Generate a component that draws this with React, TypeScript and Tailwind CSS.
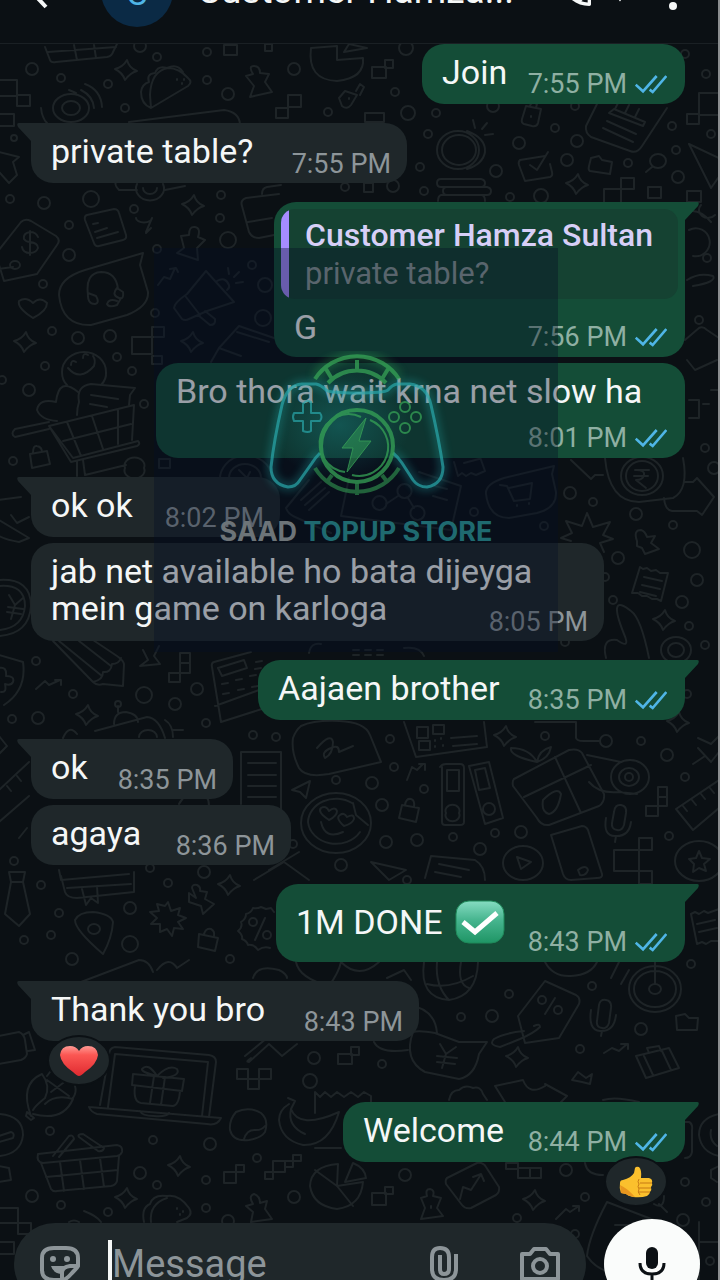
import React from 'react';

const circles = [
  [33, 69, 6], [62, 78, 4], [158, 57, 4], [109, 84, 4], [126, 108, 4], [208, 52, 4], [208, 80, 4], [229, 94, 6],
  [295, 69, 6], [141, 46, 6], [329, 112, 4], [396, 92, 4], [409, 113, 7], [437, 113, 4], [407, 48, 7], [429, 134, 4],
  [15, 138, 3], [520, 143, 6], [556, 128, 4], [578, 141, 6], [568, 160, 6], [497, 171, 6], [421, 167, 4], [629, 163, 4],
  [425, 191, 4], [542, 196, 7], [511, 197, 4], [673, 126, 4], [677, 150, 4], [707, 74, 4], [712, 134, 4], [679, 177, 6],
  [346, 187, 4], [394, 186, 6], [686, 54, 4], [494, 106, 6], [576, 106, 4],
  [11, 199, 4], [45, 203, 6], [92, 199, 8], [135, 209, 4], [70, 225, 4], [70, 255, 6], [44, 284, 4], [158, 249, 4],
  [222, 195, 4], [221, 218, 4], [229, 240, 8], [156, 313, 4], [53, 331, 4], [79, 338, 6], [111, 336, 6], [118, 357, 4],
  [133, 371, 4], [46, 366, 4], [3, 380, 4], [30, 390, 6], [145, 404, 4], [14, 461, 4], [253, 265, 4], [266, 285, 7],
  [264, 318, 8], [571, 493, 6], [594, 502, 4], [637, 514, 6], [674, 525, 4], [693, 550, 8], [619, 558, 6],
  [698, 580, 6], [683, 602, 6], [614, 600, 4], [690, 626, 4], [706, 645, 4], [475, 512, 4], [545, 526, 4],
  [706, 448, 4], [606, 577, 4], [566, 642, 4], [715, 468, 6], [700, 320, 4], [708, 258, 4],
  [37, 661, 4], [145, 695, 8], [198, 689, 6], [74, 694, 4], [176, 704, 6], [13, 719, 4], [39, 718, 6], [207, 723, 4],
  [119, 704, 3], [254, 735, 4], [277, 737, 4], [391, 739, 4], [546, 736, 4], [607, 741, 6], [642, 741, 4],
  [395, 767, 4], [668, 755, 6], [686, 777, 4], [337, 780, 4], [373, 783, 6], [383, 805, 6], [425, 789, 4],
  [387, 842, 6], [418, 840, 6], [454, 837, 4], [481, 849, 6], [496, 833, 4], [522, 832, 6], [670, 836, 4],
  [294, 844, 4], [342, 865, 6], [15, 861, 4], [205, 872, 6], [151, 868, 4], [688, 694, 4],
  [42, 885, 4], [169, 883, 4], [60, 913, 4], [131, 908, 6], [52, 935, 4], [25, 940, 4], [131, 944, 8], [73, 959, 6],
  [231, 959, 4], [408, 880, 4], [510, 994, 4], [593, 986, 4], [462, 1017, 4], [493, 1016, 6], [642, 1029, 6],
  [692, 964, 4], [581, 1049, 4], [383, 1064, 4], [315, 1058, 6], [311, 1081, 7],
  [51, 1131, 4], [154, 1140, 4], [211, 1144, 6], [141, 1173, 6], [158, 1185, 4], [207, 1180, 4], [258, 1158, 4],
  [33, 1196, 6], [62, 1205, 4], [109, 1212, 4], [207, 1208, 4], [229, 1221, 6], [295, 1197, 6],
  [567, 1170, 6], [686, 1182, 4], [586, 1197, 4], [518, 1218, 4], [684, 1220, 6], [707, 1202, 4], [576, 1234, 4],
  [406, 1175, 6], [711, 1261, 4],
];

const squares = [
  [225, 45, 13, 10], [266, 44, 7, 7], [373, 67, 14, 11], [386, 60, 8, 8], [277, 108, 12, 10], [289, 95, 13, 12],
  [366, 113, 19, 9], [0, 80, 18, 16], [18, 95, 13, 11], [0, 114, 15, 12], [365, 183, 9, 9], [700, 93, 30, 22],
  [688, 114, 12, 10], [605, 189, 17, 14], [622, 178, 13, 11], [649, 187, 13, 11], [688, 191, 14, 11],
  [133, 337, 20, 17], [153, 327, 12, 10], [153, 356, 10, 8], [160, 459, 11, 9],
  [170, 673, 11, 9], [181, 663, 10, 10], [181, 653, 10, 10], [615, 850, 25, 21], [640, 838, 13, 12],
  [640, 871, 13, 13], [647, 806, 12, 10], [659, 787, 9, 10], [659, 797, 9, 9],
  [238, 1069, 11, 10], [249, 1079, 11, 10], [260, 1069, 12, 10], [225, 1172, 12, 11], [237, 1165, 8, 7],
  [266, 1172, 8, 7], [274, 1161, 12, 11], [286, 1161, 8, 6], [294, 1155, 8, 6], [373, 1193, 14, 12],
  [386, 1187, 8, 7], [0, 1208, 19, 15], [19, 1223, 13, 11], [0, 1242, 15, 12], [507, 1163, 12, 6],
  [519, 1168, 12, 10], [531, 1168, 11, 10], [339, 1054, 14, 10], [352, 1047, 8, 8],
];

const sparkles = [
  [127, 70], [194, 205], [193, 342], [26, 342], [578, 184], [665, 620], [88, 715], [506, 736], [679, 722],
  [230, 885], [518, 1057], [180, 1166], [127, 1198], [535, 1200],
];

const sketches = [
  // basket, taco, speaker, pins along the top
  'M46 47 L51 60 Q52 63 57 62 L108 57 Q113 56 114 52 L118 44 M49 52 L117 47 M75 45 L78 60 M95 45 L97 58',
  'M152 108 L189 86 Q194 82 189 78 Q180 68 169 68 Q152 71 151 95 Z M152 108 Q142 104 142 92 Q143 84 150 82 Q147 74 156 73 Q159 65 168 68 Q178 63 184 72 M178 79 v1 M183 83 v1 M185 79 v1',
  'M54 108 a18 14 0 1 1 36 0 a18 14 0 1 1 -36 0 M63 108 a9 7 0 1 1 18 0 a9 7 0 1 1 -18 0 M86 84 Q102 90 103 107 M82 90 Q94 96 95 108 M42 108 Q43 118 48 123 M77 93 L70 90',
  'M247 76 L254 74 Q249 66 255 66 Q261 66 261 73 L270 74 L266 82 L273 92 L251 97 L255 86 Z',
  'M340 98 L346 91 L358 95 L352 105 Q348 110 343 106 Z M357 91 L361 84 L365 87 L361 95 M350 98 v1',
  'M338 46 L312 48 Q308 80 338 81 Q366 78 364 58 L338 60 Z M345 52 L350 44 L368 48 Z',
  'M130 122 L225 110 Q240 112 241 124',
  // coin stack, tags and clipboard
  'M438 150 a21 19 0 1 1 42 0 a21 19 0 1 1 -42 0 M443 150 a17 15 0 1 1 34 0 a17 15 0 1 1 -34 0 M468 131 Q487 138 486 152 Q484 164 468 169 M474 120 l2 8 M488 123 l-5 6 M494 134 l-8 1',
  'M442 179 h40 q4 1 4 4 q0 4 -4 4 h-40 q-4 0 -4 -4 q0 -4 4 -4 M448 187 h40 q4 1 4 4 q0 4 -4 4 h-40 q-4 0 -4 -4 q0 -4 4 -4 M442 195 h40 q4 0 4 6 M439 201 q0 -5 3 -6',
  'M527 106 L542 109 L539 123 Q538 127 533 126 L525 124 Q522 123 523 119 Z M531 106 Q532 101 538 104 L537 108 M532 116 v1',
  'M598 104 L587 126 Q586 133 592 137 L631 151 Q638 154 643 146 L668 108 M604 128 L634 142 M608 121 L637 134 M610 113 L644 126 L646 122 L615 109 Z M616 109 l4 -8 M626 113 l4 -8 M636 117 l4 -8',
  'M546 156 L521 160 Q519 162 520 165 L526 181 L551 177 Q554 176 553 172 L551 164 M531 165 L538 170 L549 152',
  'M592 158 L600 156 L603 160 L613 162 L611 174 L591 171 Q589 170 590 166 Z',
  'M651 161 a8 7 0 1 1 16 0 a8 7 0 1 1 -16 0 M653 167 L647 172',
  'M690 144 L720 158 M690 144 L712 188 L719 178',
  'M0 152 L20 157 L14 162 L18 175 L10 183 L0 172',
  // dollar tag, note, headset bubble, heart
  'M0 250 L22 222 Q26 218 32 221 L57 236 Q62 240 58 245 L38 274 L5 281 L0 265 M0 269 L14 267 M11 265 a5 4 0 1 1 10 0 a5 4 0 1 1 -10 0 M39 237 Q37 232 31 232 Q24 233 25 239 Q27 242 31 242 Q39 243 39 248 Q37 253 31 253 Q24 253 23 247 M31 231 V255',
  'M88 215 L115 209 Q119 209 120 213 L127 235 Q128 239 124 240 L100 246 Q96 247 95 243 L86 220 Q85 216 88 215 M94 224 l5 -1 M96 232 l12 -4 M98 238 l21 -6',
  'M144 253 L86 270 Q60 278 60 295 Q63 326 92 325 L128 315 Q150 306 149 292 L141 265 Z M89 295 Q86 273 102 272 Q117 272 119 289 M89 293 l8 3 q4 7 -1 8 q-8 0 -7 -11 M118 288 l6 4 q1 8 -4 6 q-8 -3 -2 -10 M122 298 L118 305 q-8 3 -10 -1 q2 -6 10 -3',
  'M34 318 Q18 308 20 301 Q27 296 34 303 Q41 296 48 303 Q48 311 34 318',
  'M147 232 L153 218 a7 4 0 1 1 -16 0 M147 233 L152 228',
  'M178 253 L185 248 L182 236 L190 235 Q190 226 196 227 Q202 228 199 237 L206 240 L198 248 L199 260 Z',
  // megaphone, suitcase
  'M207 271 L188 294 Q175 303 175 308 L183 319 Q186 321 190 319 L208 311 L235 302 Z M187 297 L201 315 M199 315 L211 325 Q217 325 216 319 L206 311 M218 281 Q226 276 230 285 Q231 288 228 290 M229 268 l1 6 M240 272 l-5 5 M244 282 l-7 1',
  'M159 285 L165 277 L171 279 L176 268 M171 269 L177 268 L179 272',
  'M280 194 L247 198 Q241 200 243 206 L250 232 Q253 238 260 238 L275 235 M249 222 L273 218 M263 194 q0 -6 5 -7 l14 -2',
  'M212 362 L220 348 L240 326 L275 338 M220 348 L242 356 M238 332 L270 342',
  // shopping cart with items
  'M50 426 L74 458 L139 441 Q142 444 138 446 L72 462 Z M50 422 L16 429 Q11 434 16 437 L50 429 M50 426 L135 405 L133 440 M64 441 L132 424 M68 422 L82 456 M93 416 L104 449 M119 410 V444 M78 461 V476 M84 460 L86 475 L127 465 M126 468 a10 8 0 1 1 19 0 a10 8 0 1 1 -19 0',
  'M63 372 a22 20 0 1 1 44 0 a22 18 0 0 1 -5 13 M63 372 q0 8 5 13 M69 368 q12 14 26 -2 q2 -6 -1 -10 M72 365 q0 -6 5 -3 M84 358 q0 -6 5 -3',
  'M78 415 Q78 408 80 402 Q77 386 92 384 L136 388 L131 395 L130 405 M92 395 l27 4 M91 404 l17 3 M79 392 Q60 376 57 402 Q40 398 38 410 Q42 420 58 421',
  'M31 454 L48 451 L51 464 L33 468 Z M34 453 q0 -8 4 -7 q5 1 5 6',
  // around the watermark
  'M221 482 a26 24 0 0 1 52 -5 M230 478 a16 14 0 0 1 32 0 M240 470 l8 8 l3 -6',
  'M310 480 L287 508 Q289 514 296 517 L332 533 M302 500 L322 482 M306 505 L326 488 M310 510 L330 492',
  'M350 478 L342 516 L452 530 L462 486 L420 472 M380 510 a7 7 0 1 1 1 0 M405 498 a7 7 0 1 1 1 0 M418 520 a7 7 0 1 1 1 0 M387 504 l12 -8 M409 498 l6 10 M436 486 l12 3 M434 496 l14 4',
  'M555 466 L505 478 Q486 484 487 494 Q490 518 510 518 L538 513 Q558 508 557 492 L553 474 Z M501 485 L508 486 L515 501 L531 499 L533 483 L510 488 M518 505 v1 M530 503 v1',
  'M455 462 l4 14 l4 -3 l4 3 l5 -3 l5 2 l9 -4 l-5 -14 M465 463 l15 -4',
  // rupee coin and arrows
  'M606 458 Q610 502 640 502 L674 498 Q690 490 684 458 M622 476 a21 19 0 1 1 42 0 a21 19 0 1 1 -42 0 M627 476 a16 15 0 1 1 32 0 a16 15 0 1 1 -32 0 M636 470 h14 M635 476 h14 M637 470 q9 0 8 5 q-1 5 -8 5 l10 8',
  'M572 460 L592 479 L596 475 H604 M685 482 H694 L698 478 L715 497 L703 515 L698 511 H673 Q666 510 665 498',
  'M588 513 l6 14 l17 -5 l-7 13 l10 4 l-13 4 l4 9 M588 513 l-5 13 l-16 -5 l6 12 l-11 5 l10 3',
  'M638 541 Q634 530 642 530 Q646 531 648 537 L656 536 L652 543 L660 549 L646 554 L643 548 L638 546 Z',
  'M641 567 l3 2 l4 -1 l4 3 l5 -1 l4 3 l8 0 L662 601 l-4 -2 l-5 0 l-5 -3 l-5 0 l-4 -3 l-6 0 Z M645 577 l18 4 M643 585 l18 4 M641 592 l16 4',
  'M625 634 Q608 592 632 611 Q642 618 650 658 M607 658 Q602 638 618 640 Q632 650 625 634 M662 650 a15 13 0 1 1 30 0 a15 13 0 1 1 -30 0 M669 650 a8 7 0 1 1 16 0 a8 7 0 1 1 -16 0',
  // tags and coins on the left
  'M0 500 L22 497 M0 520 L30 538 L20 542 Q8 540 0 536 M12 515 l6 8 l12 -6',
  'M0 580 Q32 578 32 606 Q30 634 0 636 M0 586 Q26 584 26 606 Q24 628 0 630 M10 595 l6 10 l8 -7 M16 605 l-4 14 M9 607 l15 2 M8 612 l14 2',
  // shield, pencil, calculator
  'M0 655 L24 662 Q28 690 5 705 M0 668 q8 -2 7 8 q9 0 7 6 q-2 4 -8 2 q2 9 -4 8',
  'M54 641 L94 682 Q98 686 104 684 L124 686 L125 664 Q124 660 118 656 L94 640 M94 682 Q104 680 104 672 Q112 673 113 664 Q120 664 122 658 M60 641 L103 676 M80 641 L112 666',
  'M144 650 l5 10 l-8 6 l20 -2 l-6 -8 l5 -10',
  'M215 662 L252 652 M215 662 Q212 663 213 667 L222 722 L266 708 M216 706 L260 690 M219 668 L245 660 L248 668 L223 676 Z M223 684 l6 -1 M237 680 l6 -1 M251 676 l6 -1 M224 694 l6 -1 M239 690 l6 -1 M253 687 l6 -1 M257 662 l6 -1 M256 669 l6 -1',
  'M37 689 L46 681 L50 685 L61 680 M56 680 h6 v5',
  'M310 653 Q312 642 322 644 M354 655 h6 M366 655 h6 M378 655 h6 M354 650 h6 M366 650 h6 M378 650 h6 M405 648 q16 -2 20 8 M96 731 L148 717 Q160 718 166 738 M115 724 q0 -12 12 -12 q12 2 12 10 M119 712 v-6 M140 737 a9 7 0 1 1 18 0 M166 720 q8 5 8 17 M174 730 h10',
  // autograph bubble, QR card, binders
  'M302 726 Q315 720 340 721 Q366 722 371 735 L382 762 L330 774 Q306 778 300 768 Q292 752 294 738 Q297 730 302 726 M318 748 q14 -16 16 -6 q0 12 -8 16 q-4 -6 6 -10 q8 -4 8 4 l14 -6',
  'M405 722 L417 757 L488 747 L485 722 M418 727 h11 v11 h-11 Z M434 725 h11 v9 h-11 Z M420 741 h11 v9 h-11 Z M436 740 v1 M442 738 v1 M436 746 v1 M444 745 v1 M452 738 l26 -2 M454 746 l24 -2',
  'M441 767 q2 -3 6 -3 h14 q4 0 4 4 v54 q0 3 -4 3 h-15 q-3 0 -3 -3 v-55 M448 770 h12 v21 h-12 Z M447 813 a7 6 0 1 1 13 0 a7 6 0 1 1 -13 0 M470 766 L490 762 L504 818 L486 824 Z M476 770 l10 -2 l5 20 l-11 2 Z M484 809 a6 6 0 1 1 12 0 a6 6 0 1 1 -12 0',
  'M408 780 L413 767 L418 770 L424 764 M420 764 l6 0 l0 6',
  'M242 752 h40 v58 M242 752 v52 M249 763 h28 M249 775 h28 M249 786 h28 M249 797 h28',
  'M293 790 L311 781 L307 798 L301 792 Z',
  'M302 823 a35 30 0 1 1 70 0 a35 30 0 1 1 -70 0 M309 822 a28 24 0 0 1 44 -19 M309 822 a28 24 0 0 0 52 10 M354 803 l3 12 l12 10 M330 820 q-12 -8 -8 -12 q5 -3 8 3 q6 -5 8 0 q0 5 -8 9 M345 826 q-9 -8 -4 -11 q4 -3 7 2 q7 -4 7 2 q-2 5 -10 7 M322 822 q4 18 22 10',
  'M403 805 L420 808 L417 822 L400 818 Z M406 805 q1 -7 6 -6 q4 1 3 8',
  // gift, camera, drum
  'M515 779 L570 750 Q579 748 583 753 L605 794 Q606 802 600 806 L550 825 Q542 826 538 818 L514 786 Q513 781 515 779 M525 797 L592 765 M556 757 L582 813 M544 800 q14 -14 18 -6 q-3 18 -12 20 q-8 -2 -6 -14 M538 762 Q510 756 512 748 Q530 748 538 762 Q540 750 552 747 Q550 758 538 762',
  'M588 755 L622 762 M590 782 Q600 794 620 792 L638 794 M612 777 a19 17 0 1 1 38 0 a19 17 0 1 1 -38 0 M620 777 a10 9 0 1 1 20 0 a10 9 0 1 1 -20 0 M626 777 a4 4 0 1 1 8 0 a4 4 0 1 1 -8 0',
  'M536 722 H577 V738 Q578 741 584 741 H600',
  'M720 780 L677 809 L694 830 L720 808 M684 806 l4 5 M693 800 l4 5 M702 794 l4 5 M711 788 l4 5',
  'M699 738 L712 744 L720 736 M699 748 L712 762 L720 752 M706 756 L694 764',
  'M615 812 q1 -8 7 -7 q6 1 5 8 l-2 12 q-2 6 -7 5 q-6 -1 -5 -7 Z M607 818 q-3 18 9 18 q14 1 16 -14 M617 836 l-1 6',
  'M552 835 L583 826 Q587 826 589 830 L603 874 Q604 878 598 878 L572 880 Q566 880 564 874 Z M579 870 q8 -6 10 0 q-2 6 -8 5 Z',
  'M504 863 a20 17 0 1 1 40 0 a20 17 0 1 1 -40 0 M518 857 L532 862 L522 869 Z M676 861 a24 20 0 1 1 48 0 a24 20 0 1 1 -48 0 M700 851 l3 7 l8 1 l-6 5 l2 7 l-7 -3 l-6 4 l1 -8 l-5 -5 l7 -1 Z',
  'M372 862 L407 870 L390 880 Z M426 878 L432 856 L476 860 Q486 866 486 880 M440 864 l30 6 M436 872 l26 5 M285 862 L310 880',
  // tie, books, pin, stars
  'M10 872 H26 L24 882 H12 Z M12 882 L6 914 L20 926 L31 914 L24 882',
  'M62 876 L66 892 Q68 898 78 898 L135 892 V872 M68 888 L132 884 M83 889 L87 905 L92 898 L99 903 L98 886',
  'M104 954 Q76 930 76 920 Q80 912 94 912 Q112 914 114 922 Q113 938 104 954 M89 929 a6 5 0 1 1 12 0 a6 5 0 1 1 -12 0',
  'M169 902 l3 9 l9 -3 l-2 7 l8 3 l-8 4 l5 7 l-9 -1 l-2 8 l-5 -7 l-7 3 l0 -8 l-9 0 l6 -6 l-7 -6 l9 -1 l-2 -7 l8 2 Z',
  'M190 893 L197 898 L193 888 Q193 884 198 885 Q202 887 201 891 L208 892 L206 899 L215 904 L204 914 L202 906 L190 902 Z',
  'M200 934 L219 938 L216 951 L199 947 Z M205 934 q2 -6 7 -5 q4 2 3 7',
  'M262 907 l5 2 l5 -1 l3 4 M262 907 q-4 2 -8 1 q-2 5 -7 6 q0 5 -5 8 q2 5 -3 9 q5 4 4 8 q5 2 6 6 q6 -1 10 5 q6 -4 12 -2 M266 918 L256 940 M250 922 a4 4 0 1 1 8 0 a4 4 0 1 1 -8 0 M264 935 a4 4 0 1 1 8 0 a4 4 0 1 1 -8 0',
  'M692 914 l4 -2 l4 2 l5 -3 l4 2 l11 -4 M692 914 l6 30 l5 -2 l4 2 l5 -3 l8 0 M698 924 l18 -4 M700 932 l18 -4',
  // ball, wheel, percent tag
  'M425 962 Q420 998 450 1000 Q478 996 479 962 M438 962 Q436 986 450 1000 M462 962 Q458 984 470 988 M428 984 Q450 990 474 976',
  'M630 989 a26 23 0 1 1 52 0 a26 23 0 1 1 -52 0 M635 989 a21 18 0 1 1 42 0 a21 18 0 1 1 -42 0 M650 989 a6 5 0 1 1 12 0 a6 5 0 1 1 -12 0 M656 984 V962 M546 962 q8 15 26 14 q20 -1 26 -14 M612 978 l8 -16 M622 984 l8 -14',
  'M297 962 Q300 978 330 986 Q340 972 342 962 M342 962 Q360 980 380 962 M82 982 L140 960 Q150 960 154 972 M158 970 Q170 955 178 968 L190 960 M254 978 q4 -14 26 -8 q8 4 8 8 M388 978 L405 970 L412 980',
  'M546 981 L577 995 Q582 998 580 1004 L560 1038 L526 1043 L519 1016 Z M535 1026 q6 -3 6 1 q-6 6 -20 12 l-20 8 q-12 -2 -6 -8 q10 -6 30 -8 M556 998 L546 1014 M539 1000 a4 4 0 1 1 8 0 a4 4 0 1 1 -8 0 M555 1010 a4 4 0 1 1 8 0 a4 4 0 1 1 -8 0',
  'M600 1005 q1 -6 7 -5 q6 1 5 8 l-2 15 q-2 6 -7 5 q-6 -1 -5 -7 Z M592 1010 q-3 20 9 21 q14 1 16 -16 M603 1031 l-1 5 M677 1016 L686 1014 L690 1018 L699 1018 L698 1030 L678 1030 Z',
  'M414 1032 Q404 1060 426 1072 L460 1079 Q476 1076 480 1054 L488 1042 L460 1042 L436 1033 Q420 1030 414 1032 M441 1044 l6 10 l10 -7 M447 1054 l-4 14 M438 1056 l20 2 M438 1062 l18 2',
  'M605 1053 L613 1048 L620 1051 L628 1044 M622 1044 h7 v5 M637 1056 L670 1048 L680 1068 L647 1078 Z M650 1053 l-2 -5 l12 -2 l2 5 M645 1056 l9 19 M663 1051 l9 19',
  'M410 1005 q26 4 28 28 M375 1042 q6 12 34 8',
  // corn, laptop, banana and basket
  'M0 1036 L20 1032 Q25 1034 26 1040 L28 1054 Q27 1058 22 1060 L0 1064 M24 1035 L30 1032 L36 1050 L29 1051',
  'M32 1116 Q20 1084 43 1074 Q52 1086 46 1098 Q36 1106 34 1110 M34 1114 Q64 1122 74 1099 Q56 1094 46 1104 M28 1112 l7 6 l-3 2 l-5 -4 Z M48 1080 L70 1096 M52 1092 L68 1080 M48 1076 l3 -4 M76 1086 q2 6 -2 12',
  'M90 1107 L222 1118 Q218 1126 208 1124 L98 1114 Q92 1112 90 1107 M101 1105 L110 1055 Q110 1048 116 1047 L210 1055 Q217 1056 217 1062 L210 1117 M109 1107 L116 1054 L209 1062 L203 1116 M141 1111 q2 5 14 5 q13 1 15 -3',
  'M134 1074 L185 1079 L183 1091 L133 1085 Z M136 1086 q-2 16 6 17 L174 1106 q6 -1 7 -15 M155 1076 L151 1103 M166 1077 L162 1105 M158 1076 q-16 -4 -15 -7 q6 -7 15 7 q12 -12 20 -7 q4 7 -14 9',
  'M252 1058 Q246 1062 250 1062 L270 1044 L283 1056 L298 1044 M246 1056 L268 1038',
  'M237 1112 Q250 1106 262 1113 Q270 1120 266 1132 Q262 1138 250 1140 Q234 1142 231 1130 Q230 1120 237 1112 M245 1139 q3 -10 12 -9 q6 0 9 -4',
  'M289 1098 L296 1101 L292 1109 Q300 1130 340 1112 Q330 1146 304 1145 Q282 1140 280 1120 Q280 1110 290 1104 M292 1109 Q288 1126 306 1134 M316 1113 V1092 l5 5 l5 -5 l6 5 l6 -5 l7 5 l7 -5 l7 5 l6 -5 l7 4 V1102 M316 1148 h26',
  'M39 1154 L118 1145 Q124 1146 123 1152 Q122 1155 118 1156 L44 1163 Q37 1162 39 1154 M42 1163 L52 1189 Q54 1192 58 1191 L112 1186 Q117 1185 118 1181 L120 1156 M47 1177 L119 1170 M61 1162 L65 1191 M81 1160 L85 1189 M101 1158 L105 1187 M54 1156 L70 1136 Q74 1134 75 1139 L60 1157 M80 1137 L99 1151 Q104 1152 105 1148 L84 1134 Q78 1134 80 1137',
  'M0 1114 Q24 1116 24 1135 Q22 1154 0 1156 M0 1136 L12 1132 Q16 1133 14 1138 L0 1142 M0 1166 L10 1168 L12 1180 L0 1182',
  'M338 1186 L339 1164 Q312 1166 311 1186 Q314 1206 338 1209 Q362 1206 364 1182 Z M338 1186 L316 1170 M338 1186 L354 1206 M346 1182 L354 1163 Q366 1168 367 1178 Z',
  'M145 1222 Q142 1208 151 1204 Q154 1194 168 1196 Q180 1194 190 1208 Q194 1214 188 1218 L178 1222 M152 1222 Q150 1204 168 1198 M178 1208 v1 M184 1211 v1 M181 1214 v1 M85 1211 Q98 1216 102 1222 M70 1222 q5 -3 10 0',
  'M247 1206 L254 1204 Q249 1196 255 1194 Q261 1196 261 1203 L268 1201 L266 1209 L273 1219 L252 1222 L254 1212 Z M422 1198 L428 1196 Q426 1189 431 1189 Q436 1190 434 1196 L442 1198 L438 1208 L444 1216 L422 1219 L426 1208 Z M432 1206 v2',
  'M448 1178 L478 1163 Q484 1162 487 1167 L500 1187 Q501 1192 497 1195 L472 1208 Q466 1209 463 1205 L447 1184 Q446 1180 448 1178 M461 1199 L464 1187 L472 1190 L481 1176 M474 1177 L482 1174 L485 1181',
  'M557 1219 L567 1209 L571 1212 L580 1206 M574 1206 h6 v5 M588 1256 Q590 1236 608 1202 L655 1220 M588 1256 Q596 1268 610 1272 M616 1225 h14 M586 1163 q2 12 18 12 M655 1204 q10 6 10 -8 M660 1204 l8 8',
  'M450 1100 Q452 1090 460 1090 Q466 1084 474 1088 Q482 1086 484 1094 L488 1100 M496 1086 L506 1102 M496 1086 L524 1080 Q530 1096 546 1086 M546 1084 L568 1096 L562 1102 M604 1100 Q616 1096 640 1102 M573 1080 l6 -8 l8 6 l6 -4 l-2 10 l-8 -2 Z',
  'M686 1122 H690 Q694 1124 693 1130 V1152 Q692 1158 686 1158 M720 1114 Q700 1118 700 1135 Q702 1152 720 1156 M712 1130 q-2 10 6 16 M712 1170 l8 -4 M712 1170 v8 l6 4',
  'M700 1222 V1280 M700 1242 H720',
  // mid right column
  'M688 212 Q700 208 712 222 M702 205 a8 7 0 1 0 14 10 M690 230 a14 14 0 1 1 4 26 M688 280 q12 -8 26 -4 q4 6 -20 10 M686 340 L700 328 Q704 326 708 330 L720 338 M688 360 L696 370 L718 360 M690 400 h10 v18 h-10 M712 390 h8 M704 404 h6',
  'M118 180 Q114 184 120 190 H138 M138 184 a14 12 0 1 0 26 0 M144 188 a7 6 0 1 0 14 0 M166 190 L186 186',
  'M0 790 L30 762 M0 822 L30 796 M8 786 l4 5 M18 776 l4 5 M64 738 q6 -14 14 -4 M0 736 l8 10 l-8 8 M20 838 l8 -10 M180 804 q6 -12 20 -12 q10 2 10 14 M60 870 L62 880 L130 874 M270 870 L300 852 M255 880 L285 862',
];

const Wallpaper = () => {
  return (
    <svg
      className="pointer-events-none absolute inset-0 h-full w-full"
      viewBox="0 0 720 1280"
      preserveAspectRatio="xMidYMin slice"
      fill="none"
      stroke="#1e2427"
      strokeWidth="2"
      strokeLinecap="round"
      strokeLinejoin="round"
      aria-hidden="true"
    >
      {circles.map(([x, y, r]) => (
        <circle key={`${x}-${y}`} cx={x} cy={y} r={r} />
      ))}
      {squares.map(([x, y, w, h]) => (
        <rect key={`${x}-${y}`} x={x} y={y} width={w} height={h} />
      ))}
      {sparkles.map(([x, y]) => (
        <path
          key={`${x}-${y}`}
          transform={`translate(${x} ${y})`}
          d="M1 -10 Q3 -2 11 1 Q4 3 -1 10 Q-3 3 -11 -1 Q-3 -3 1 -10 Z"
        />
      ))}
      {sketches.map((d) => (
        <path key={d} d={d} />
      ))}
    </svg>
  );
};

const Ticks = () => (
  <svg className="h-[19px] w-8" viewBox="0 0 96 57" fill="none" stroke="#4fb5e6" strokeWidth="8" aria-label="Read">
    <path d="M2 29 L24 49 L65 3 M44 44 L53 51 L94 3" />
  </svg>
);

const Tail = ({ side }: { side: 'left' | 'right' }) =>
  side === 'left' ? (
    <svg className="absolute top-0 -left-[14px] h-6 w-10 text-[#1f272a]" viewBox="0 0 40 24" fill="currentColor" aria-hidden="true">
      <path d="M2 0 H40 V24 H14 V18 L1 4 Q-1 0 2 0 Z" />
    </svg>
  ) : (
    <svg className="absolute top-0 -right-[14px] h-6 w-10 text-[#144d37]" viewBox="0 0 40 24" fill="currentColor" aria-hidden="true">
      <path d="M38 0 H0 V24 H26 V18 L39 4 Q41 0 38 0 Z" />
    </svg>
  );

type BubbleProps = {
  mine?: boolean;
  tail?: boolean;
  time: string;
  className: string;
  quote?: React.ReactNode;
  reaction?: React.ReactNode;
  children: React.ReactNode;
};

const Bubble = ({ mine, tail, time, className, quote, reaction, children }: BubbleProps) => {
  return (
    <div
      className={`relative flex max-w-full flex-col rounded-[22px] ${
        mine ? 'self-end bg-[#144d37]' : 'self-start bg-[#1f272a]'
      } ${className}`}
    >
      {tail && <Tail side={mine ? 'right' : 'left'} />}
      {quote}
      <div className={`relative flex flex-1 justify-between pt-[10px] pb-1 pl-5 ${mine ? 'pr-[18px]' : 'pr-4'}`}>
        <div className="self-start text-[34px] leading-[37px] whitespace-nowrap text-[#f5f7f7]">{children}</div>
        <div
          className={`flex items-center gap-2 self-end text-[27px] leading-[30px] whitespace-nowrap ${
            mine ? 'pb-px text-[#8fb0a3]' : 'text-[#8d9599]'
          }`}
        >
          <time>{time}</time>
          {mine && <Ticks />}
        </div>
      </div>
      {reaction}
    </div>
  );
};

const CheckEmoji = () => (
  <svg className="h-11 w-[50px]" viewBox="0 0 50 44" role="img" aria-label="Done">
    <defs>
      <linearGradient id="check" x1="0" y1="0" x2="0" y2="1">
        <stop offset="0" stopColor="#86dcc2" />
        <stop offset="0.45" stopColor="#47b58f" />
        <stop offset="1" stopColor="#1f9565" />
      </linearGradient>
    </defs>
    <rect x="1" y="1" width="48" height="42" rx="13" fill="url(#check)" stroke="#1f8a5a" />
    <path d="M8 22 L20 32 L42 13" fill="none" stroke="#fff" strokeWidth="5" />
  </svg>
);

const HeartEmoji = () => (
  <svg className="h-[30px] w-[38px]" viewBox="0 0 38 30" role="img" aria-label="Heart">
    <defs>
      <linearGradient id="heart" x1="0" y1="0" x2="0" y2="1">
        <stop offset="0" stopColor="#ff9a94" />
        <stop offset="0.3" stopColor="#fb5753" />
        <stop offset="1" stopColor="#e02a30" />
      </linearGradient>
    </defs>
    <path d="M19 30 Q17 30 13 26 Q1 18 0 9 Q1 0 10 0 Q16 0 19 5 Q22 0 28 0 Q37 0 38 9 Q37 18 25 26 Q21 30 19 30 Z" fill="url(#heart)" />
  </svg>
);

const ThumbEmoji = () => (
  <svg className="h-8 w-[34px]" viewBox="0 0 34 32" role="img" aria-label="Thumbs up">
    <path
      d="M1 17 Q1 14 4 14 Q12 12 15 7 L16 2 Q17 0 20 1 Q23 4 22 12 L30 12 Q34 13 33 17 Q34 19 32 21 Q33 24 31 26 Q31 28 28 30 Q22 32 14 31 Q9 30 7 28 L2 27 Q0 22 1 17 Z"
      fill="#fbc02d"
    />
    <path d="M1 19 Q8 22 16 31 Q9 30 7 28 L2 27 Z" fill="#e8961f" />
    <path
      d="M21 17 H33 M20 22 H32 M20 26 H31 M20 13 Q18 16 20 18 Q18 21 20 23 Q18 26 21 29"
      fill="none"
      stroke="#c77a14"
      strokeWidth="1"
    />
  </svg>
);

const StoreLogo = () => (
  <svg className="absolute inset-0 h-full w-full" viewBox="154 248 404 404" fill="none" aria-hidden="true">
    <defs>
      <radialGradient id="glow">
        <stop offset="0" stopColor="#1fa5a5" stopOpacity="0.28" />
        <stop offset="1" stopColor="#1fa5a5" stopOpacity="0" />
      </radialGradient>
      <filter id="soft" x="-20%" y="-20%" width="140%" height="140%">
        <feGaussianBlur stdDeviation="4" />
      </filter>
      <path
        id="pad"
        d="M320 453 Q315 458 312 463 L300 480 Q296 487 288 487 Q271 484 271 467 Q274 440 282 405 Q287 385 302 384 L316 384 Q321 385 326 390 Q330 393 357 393 Q384 393 388 390 Q392 385 397 384 L410 384 Q427 386 431 405 Q439 440 443 467 Q443 484 427 487 Q418 487 413 480 L402 463 Q398 457 393 453"
      />
    </defs>
    <ellipse cx="340" cy="425" rx="70" ry="55" fill="url(#glow)" />
    <use href="#pad" stroke="#22b8b8" strokeWidth="7" opacity="0.35" filter="url(#soft)" />
    <path d="M315 377 A52 52 0 0 1 399 377" stroke="#2fae55" strokeWidth="8" opacity="0.35" filter="url(#soft)" />
    <use href="#pad" stroke="#2aa7a9" strokeWidth="3" opacity="0.7" />
    <path
      d="M305 402 Q308 400 311 402 V413 H320 Q323 417 320 421 H311 V431 Q308 433 303 431 V421 H294 Q292 417 294 413 H303 V404 Z"
      stroke="#2aa7a9"
      strokeWidth="2"
      strokeLinejoin="round"
      opacity="0.7"
    />
    <g stroke="#36a356" opacity="0.75">
      <circle cx="357" cy="446" r="36" strokeWidth="4" />
      <path d="M361 417 A29 29 0 1 0 345 472 M370 420 A29 29 0 0 1 352 475" strokeWidth="2" />
      <path d="M315 379 A50 50 0 0 1 399 379 M328 383 A40 40 0 0 1 386 383 M357 360 V372 M326 369 L332 379 M388 369 L382 379" strokeWidth="4" />
      <g opacity="0.75">
        <path d="M315 468 A49 49 0 0 0 399 468 M357 483 V495 M332 475 L326 483 M382 475 L388 483" strokeWidth="4" />
      </g>
      <g strokeWidth="2">
        <circle cx="405" cy="407" r="5" />
        <circle cx="394" cy="417" r="5" />
        <circle cx="416" cy="417" r="5" />
        <circle cx="405" cy="428" r="5" />
      </g>
    </g>
    <path d="M366 418 L342 448 H353 L347 472 L371 441 H359 Z" fill="#36a356" fillOpacity="0.6" stroke="#3aa658" opacity="0.8" />
  </svg>
);

const Header = () => {
  return (
    <header className="relative flex h-11 shrink-0 items-end overflow-hidden border-b border-[#1a2024] bg-[#0b1014] px-5 pb-4">
      <div className="flex h-[72px] w-full items-center">
        <button type="button" aria-label="Back" className="w-[81px] shrink-0 pl-2">
          <svg className="h-9 w-6" viewBox="0 0 24 36" fill="none" stroke="#f5f7f7" strokeWidth="4" aria-hidden="true">
            <path d="M18 2 L3 18 L18 34" />
          </svg>
        </button>
        <div className="flex size-[72px] shrink-0 items-center justify-center rounded-full bg-[#0b2a45] pt-1 text-[34px] text-[#4fb5e6]">C</div>
        <h1 className="ml-6 flex-1 text-[37px] leading-[44px] whitespace-nowrap text-[#f5f7f7]">Customer Hamza...</h1>
        <button type="button" aria-label="Call" className="flex items-center gap-3">
          <svg className="size-10" viewBox="0 0 24 24" fill="#f5f7f7" aria-hidden="true">
            <path d="M6.540 5c.06.890.21 1.760.45 2.590l-1.200 1.200c-.41-1.200-.67-2.470-.76-3.790h1.510m9.860 12.020c.85.240 1.720.39 2.600.45v1.490c-1.320-.09-2.590-.35-3.800-.75l1.200-1.190M7.500 3H4c-.55 0-1 .45-1 1 0 9.390 7.610 17 17 17 .55 0 1-.45 1-1v-3.490c0-.55-.45-1-1-1-1.240 0-2.450-.2-3.570-.57a1 1 0 0 0-1.020.24l-2.200 2.200a15.100 15.100 0 0 1-6.590-6.590l2.200-2.200c.28-.28.36-.67.25-1.020A11.400 11.400 0 0 1 8.500 4c0-.55-.45-1-1-1z" />
          </svg>
          <svg className="h-6 w-6" viewBox="0 0 24 24" fill="none" stroke="#f5f7f7" strokeWidth="3" aria-hidden="true">
            <path d="M4 10 L12 20 L20 10" />
          </svg>
        </button>
        <button type="button" aria-label="More options" className="ml-9 pr-5">
          <svg className="h-10 w-[10px]" viewBox="0 0 10 40" fill="#f5f7f7" aria-hidden="true">
            <circle cx="5" cy="5" r="4" />
            <circle cx="5" cy="20" r="4" />
            <circle cx="5" cy="35" r="4" />
          </svg>
        </button>
      </div>
    </header>
  );
};

const Composer = () => {
  return (
    <form className="relative mt-[57px] flex shrink-0 items-center pr-[18px] pl-[14px]" onSubmit={(e) => e.preventDefault()}>
      <div className="flex h-[82px] min-w-0 flex-1 items-center rounded-full bg-[#1f272a] px-[26px]">
        <button type="button" aria-label="Stickers" className="shrink-0">
          <svg className="h-9 w-10" viewBox="0 0 40 36" fill="none" stroke="#8d9599" strokeWidth="4" aria-hidden="true">
            <path d="M2 12 Q2 2 14 2 H26 Q38 2 38 12 V20 Q37 22 32 27 Q26 34 22 34 H14 Q2 34 2 24 Z M37 20 H30 Q22 21 22 27 V34" />
            <circle cx="13" cy="13" r="3" fill="#8d9599" stroke="none" />
            <circle cx="27" cy="13" r="3" fill="#8d9599" stroke="none" />
            <path d="M11 20 H27 L22 23 L21 28 Q13 27 11 20 Z" fill="#8d9599" stroke="none" />
          </svg>
        </button>
        <div className="ml-7 h-12 w-1 shrink-0 bg-[#f5f7f7]" />
        <input
          type="text"
          aria-label="Message"
          placeholder="Message"
          className="min-w-0 flex-1 bg-transparent text-[38px] leading-[44px] text-[#f5f7f7] outline-none placeholder:text-[#8d9599]"
        />
        <button type="button" aria-label="Attach" className="mr-[62px] shrink-0">
          <svg className="h-9 w-[28px]" viewBox="0 0 28 36" fill="none" stroke="#8d9599" strokeWidth="4" aria-hidden="true">
            <path d="M26 8 V23 Q26 34 14 34 Q2 34 2 23 V11 Q2 2 10 2 Q19 2 19 11 V23 Q19 28 14 28 Q10 28 10 23 V9" />
          </svg>
        </button>
        <button type="button" aria-label="Camera" className="shrink-0">
          <svg className="h-9 w-10" viewBox="0 0 40 36" fill="none" stroke="#8d9599" strokeWidth="4" strokeLinejoin="round" aria-hidden="true">
            <path d="M2 8 H10 L14 3 H26 L30 8 H38 V33 H2 Z" />
            <circle cx="20" cy="20" r="7" />
          </svg>
        </button>
      </div>
      <button
        type="button"
        aria-label="Record voice message"
        className="ml-[18px] flex h-[90px] w-24 shrink-0 items-center justify-center rounded-[50%] bg-[#fafcfb]"
      >
        <svg className="h-9 w-7" viewBox="0 0 28 36" fill="none" stroke="#0b1014" strokeWidth="3" aria-hidden="true">
          <rect x="8" y="1" width="12" height="22" rx="6" fill="#0b1014" stroke="none" />
          <path d="M2 17 Q2 28 14 28 Q26 28 26 17 M14 28 V35" />
        </svg>
      </button>
    </form>
  );
};

export default function App() {
  return (
    <div className="relative flex h-screen flex-col overflow-hidden border-r-2 border-[#8b8e90] bg-[#0b1014] font-['Roboto',sans-serif]">
      <Wallpaper />
      <Header />

      <main className="relative flex shrink-0 flex-col pr-[33px] pl-[31px]">
        <Bubble mine time="7:55 PM" className="min-h-[60px] w-[263px]">Join</Bubble>
        <Bubble tail time="7:55 PM" className="mt-[19px] min-h-[60px] w-[376px]">private table?</Bubble>
        <Bubble
          mine
          tail
          time="7:56 PM"
          className="mt-[19px] min-h-[155px] w-[411px]"
          quote={
            <div className="relative mx-[7px] mt-[7px] flex h-[90px] overflow-hidden rounded-[14px] bg-[#154232]">
              <div className="w-2 bg-[#a58cff]" />
              <div className="pt-2 pl-4 whitespace-nowrap">
                <p className="text-[32px] leading-[37px] font-medium text-[#d7cff7]">Customer Hamza Sultan</p>
                <p className="text-[31px] leading-[40px] text-[#8d9a9a]">private table?</p>
              </div>
            </div>
          }
        >
          G
        </Bubble>
        <Bubble mine time="8:01 PM" className="mt-[6px] min-h-[95px] w-[529px]">
          <p className="w-0">Bro thora wait krna net slow ha</p>
        </Bubble>
        <Bubble tail time="8:02 PM" className="mt-[19px] min-h-[60px] w-[249px]">ok ok</Bubble>
        <Bubble time="8:05 PM" className="mt-[6px] min-h-[98px] w-[573px]">
          <p className="w-[420px]">
            jab net available ho bata dijeyga
            <br />
            mein game on karloga
          </p>
        </Bubble>
        <Bubble mine tail time="8:35 PM" className="mt-[19px] min-h-[60px] w-[427px]">Aajaen brother</Bubble>
        <Bubble tail time="8:35 PM" className="mt-[19px] min-h-[60px] w-[202px]">ok</Bubble>
        <Bubble time="8:36 PM" className="mt-[6px] min-h-[60px] w-[260px]">agaya</Bubble>
        <Bubble mine tail time="8:43 PM" className="mt-[19px] min-h-[78px] w-[409px]">
          <p className="flex items-center gap-3 pt-[6px]">
            1M DONE <CheckEmoji />
          </p>
        </Bubble>
        <Bubble
          tail
          time="8:43 PM"
          className="mt-[19px] min-h-[60px] w-[388px]"
          reaction={
            <div className="absolute top-[54px] left-4 flex h-[51px] w-16 items-center justify-center rounded-[50%] border-2 border-[#0b1014] bg-[#1f272a]">
              <HeartEmoji />
            </div>
          }
        >
          Thank you bro
        </Bubble>
        <Bubble
          mine
          tail
          time="8:44 PM"
          className="mt-[61px] min-h-[60px] w-[342px]"
          reaction={
            <div className="absolute top-[54px] right-[17px] flex h-[51px] w-16 items-center justify-center rounded-[50%] border-2 border-[#0b1014] bg-[#1f272a]">
              <ThumbEmoji />
            </div>
          }
        >
          Welcome
        </Bubble>
      </main>

      <Composer />

      <div className="pointer-events-none absolute top-[248px] left-[154px] size-[404px] bg-[#061126]/38">
        <StoreLogo />
        <p className="absolute inset-x-0 top-[268px] text-center font-['Inter',sans-serif] text-[27px] leading-[32px] font-bold whitespace-nowrap text-[#6d7478]">
          SAAD <span className="text-[#1f6a70]">TOPUP STORE</span>
        </p>
      </div>
    </div>
  );
}
